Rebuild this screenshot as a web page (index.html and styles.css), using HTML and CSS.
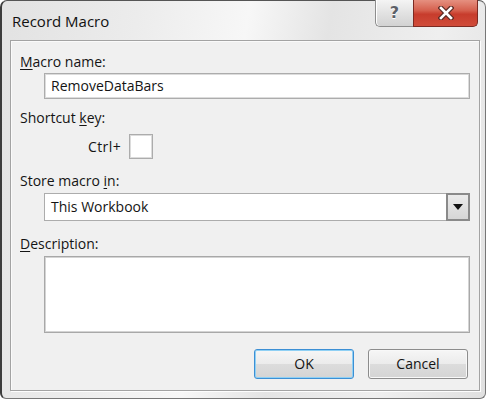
FILE: index.html
```html
<!DOCTYPE html>
<html>
<head>
<meta charset="utf-8">
<title>Record Macro</title>
<link rel="stylesheet" href="styles.css">
</head>
<body>
<div class="window">
  <div class="titlebar">
    <div class="title">Record Macro</div>
    <div class="caption-buttons">
      <div class="btn-help"><span>?</span></div>
      <div class="btn-close">
        <svg width="16" height="14" viewBox="0 0 16 14">
          <path d="M3 2 L13 12 M13 2 L3 12" stroke="#5a2a24" stroke-width="5" stroke-linecap="square"/>
          <path d="M3 2 L13 12 M13 2 L3 12" stroke="#ffffff" stroke-width="2.6" stroke-linecap="square"/>
        </svg>
      </div>
    </div>
  </div>
  <div class="panel">
    <div class="label"><u>M</u>acro name:</div>
    <div class="textbox name-box">RemoveDataBars</div>
    <div class="label label-shortcut">Shortcut <u>k</u>ey:</div>
    <div class="ctrl-row">
      <span class="ctrl-text">Ctrl+</span>
      <div class="key-box"></div>
    </div>
    <div class="label label-store">Store macro <u>i</u>n:</div>
    <div class="combo">
      <div class="combo-text">This Workbook</div>
      <div class="combo-btn">
        <svg width="10" height="6" viewBox="0 0 10 6"><path d="M0 0 H10 L5 6 Z" fill="#111"/></svg>
      </div>
    </div>
    <div class="label label-desc"><u>D</u>escription:</div>
    <div class="desc-box"></div>
    <div class="buttons">
      <div class="button button-ok">OK</div>
      <div class="button button-cancel">Cancel</div>
    </div>
  </div>
</div>
</body>
</html>
```

FILE: styles.css
```css
* { box-sizing: border-box; }
html, body {
  margin: 0;
  padding: 0;
  background: #ffffff;
}
body {
  width: 488px;
  height: 400px;
  overflow: hidden;
  font-family: "Open Sans", "Noto Sans", sans-serif;
  color: #141414;
}
.window {
  width: 486px;
  height: 399px;
  border: 1px solid #777;
  border-left: 2px solid #3c3c3c;
  border-top-color: #555;
  border-radius: 7px 7px 6px 6px;
  background: linear-gradient(100deg, #e2e2e2 0%, #ececec 25%, #f7f7f7 45%, #e4e4e4 60%, #efefef 80%, #e0e0e0 100%);
  display: flex;
  flex-direction: column;
}
.titlebar {
  height: 39px;
  display: flex;
  align-items: flex-start;
  flex-shrink: 0;
}
.title {
  font-size: 15px;
  line-height: 20px;
  padding: 10px 0 0 10px;
  color: #111;
  flex: 1;
}
.caption-buttons {
  display: flex;
  margin-right: 7px;
  margin-top: -1px;
}
.btn-help {
  width: 38px;
  height: 27px;
  border: 1px solid #8d8d8d;
  border-top: none;
  border-right: none;
  border-radius: 0 0 0 5px;
  background: linear-gradient(#f4f4f4, #e2e2e2 50%, #d2d2d2);
  box-shadow: inset 1px 0 0 #fff;
  display: flex;
  align-items: center;
  justify-content: center;
}
.btn-help span {
  font-family: "DejaVu Sans", sans-serif;
  font-weight: bold;
  font-size: 16px;
  line-height: 16px;
  color: #5c6068;
  text-shadow: 0 0 1px #fff, 0 1px 0 #fff;
  margin-top: -1px;
}
.btn-close {
  width: 65px;
  height: 27px;
  border: 1px solid #7c2a22;
  border-top: none;
  border-radius: 0 0 5px 0;
  background: linear-gradient(#e59080 0%, #d5604e 40%, #c73c2c 55%, #d04c3a 100%);
  display: flex;
  align-items: center;
  justify-content: center;
}
.btn-close svg { display: block; margin-top: -1px; }
.panel {
  margin-left: 8px;
  width: 470px;
  height: 351px;
  border: 1px solid #a3a3a3;
  background: #f0f0f0;
  box-shadow: 1px 1px 0 #fdfdfd, inset 1px 1px 0 #fafafa;
  padding: 11px 9px 0 9px;
  display: flex;
  flex-direction: column;
}
.label {
  font-size: 14px;
  line-height: 20px;
  height: 20px;
}
.label u { text-underline-offset: 2px; }
.textbox {
  margin-left: 24px;
  margin-top: 1px;
  height: 26px;
  background: #fff;
  border: 1px solid #acacac;
  box-shadow: inset 0 0 0 1px #dcdcdc;
  font-size: 14px;
  line-height: 24px;
  padding-left: 6px;
}
.label-shortcut { margin-top: 9px; }
.ctrl-row {
  display: flex;
  align-items: center;
  margin-top: 6px;
  padding-left: 68px;
}
.ctrl-text {
  font-size: 14px;
  line-height: 20px;
  letter-spacing: 0.4px;
}
.key-box {
  width: 24px;
  height: 25px;
  margin-left: 8px;
  background: #fff;
  border: 1px solid #acacac;
  box-shadow: inset 0 0 0 1px #dcdcdc;
}
.label-store { margin-top: 12px; }
.combo {
  margin-left: 24px;
  margin-top: 2px;
  height: 28px;
  display: flex;
  background: #fff;
  border: 1px solid #acacac;
}
.combo-text {
  flex: 1;
  font-size: 14px;
  line-height: 26px;
  padding-left: 6px;
}
.combo-btn {
  width: 24px;
  margin: -1px -1px -1px 0;
  border: 2px solid #8a8a8a;
  background: linear-gradient(#ebebeb, #d6d6d6);
  display: flex;
  align-items: center;
  justify-content: center;
}
.label-desc { margin-top: 13px; }
.desc-box {
  margin-left: 24px;
  margin-top: 2px;
  height: 77px;
  background: #fff;
  border: 1px solid #a8a8a8;
  box-shadow: inset 0 0 0 1px #d4d4d4;
}
.buttons {
  display: flex;
  justify-content: flex-end;
  gap: 14px;
  margin-top: 16px;
  margin-right: 2px;
}
.button {
  width: 100px;
  height: 30px;
  border-radius: 3px;
  font-size: 14px;
  line-height: 28px;
  text-align: center;
  background: linear-gradient(#f6f6f6 0%, #ebebeb 50%, #dcdcdc 51%, #d4d4d4 100%);
}
.button-ok {
  border: 1px solid #3c8fd4;
  box-shadow: inset 0 0 0 1px #8fd0f4;
}
.button-cancel {
  border: 1px solid #8c8c8c;
  box-shadow: inset 0 0 0 1px #f8f8f8;
}
```
